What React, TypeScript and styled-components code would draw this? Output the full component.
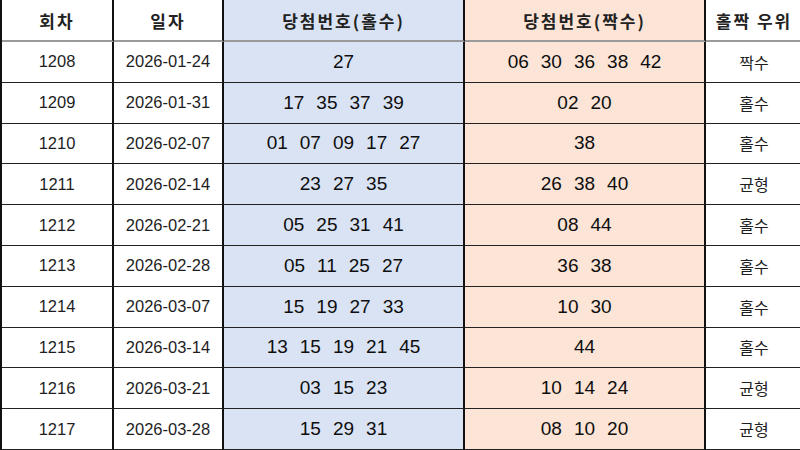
import React from 'react';
import styled, { createGlobalStyle } from 'styled-components';

const GlobalStyle = createGlobalStyle`
  html, body {
    margin: 0;
    padding: 0;
    background: #ffffff;
  }
  body {
    font-family: "Liberation Sans", "Noto Sans CJK KR", Arial, sans-serif;
    color: #1a1a1a;
  }
`;

type Row = {
  round: number;
  date: string;
  odd: string[];
  even: string[];
  result: string;
};

const rows: Row[] = [
  { round: 1208, date: '2026-01-24', odd: ['27'], even: ['06', '30', '36', '38', '42'], result: '짝수' },
  { round: 1209, date: '2026-01-31', odd: ['17', '35', '37', '39'], even: ['02', '20'], result: '홀수' },
  { round: 1210, date: '2026-02-07', odd: ['01', '07', '09', '17', '27'], even: ['38'], result: '홀수' },
  { round: 1211, date: '2026-02-14', odd: ['23', '27', '35'], even: ['26', '38', '40'], result: '균형' },
  { round: 1212, date: '2026-02-21', odd: ['05', '25', '31', '41'], even: ['08', '44'], result: '홀수' },
  { round: 1213, date: '2026-02-28', odd: ['05', '11', '25', '27'], even: ['36', '38'], result: '홀수' },
  { round: 1214, date: '2026-03-07', odd: ['15', '19', '27', '33'], even: ['10', '30'], result: '홀수' },
  { round: 1215, date: '2026-03-14', odd: ['13', '15', '19', '21', '45'], even: ['44'], result: '홀수' },
  { round: 1216, date: '2026-03-21', odd: ['03', '15', '23'], even: ['10', '14', '24'], result: '균형' },
  { round: 1217, date: '2026-03-28', odd: ['15', '29', '31'], even: ['08', '10', '20'], result: '균형' },
];

type Tone = 'plain' | 'odd' | 'even';

const toneBg: Record<Tone, string> = {
  plain: '#ffffff',
  odd: '#dae3f3',
  even: '#fce4d6',
};

const Table = styled.div`
  display: grid;
  grid-template-columns: 112px 110px 241px 241px 96px;
  grid-template-rows: 42px repeat(10, 1fr);
  width: 800px;
  height: 450px;
  border-left: 2px solid #111;
  box-sizing: border-box;
  overflow: hidden;
`;

const Cell = styled.div<{ $tone?: Tone; $last?: boolean; $head?: boolean }>`
  display: flex;
  align-items: center;
  justify-content: center;
  box-sizing: border-box;
  background: ${(p) => toneBg[p.$tone || 'plain']};
  border-right: ${(p) => (p.$last ? 'none' : '2px solid #111')};
  border-bottom: ${(p) => (p.$head ? '2px solid #9a9a9a' : '1px solid #222')};
  white-space: nowrap;
`;

const HeadText = styled.span`
  font-family: "Noto Sans CJK KR", sans-serif;
  font-weight: 700;
  font-size: 17px;
  letter-spacing: 2px;
  color: #222;
`;

const PlainText = styled.span<{ $korean?: boolean }>`
  font-family: ${(p) =>
    p.$korean ? '"Noto Sans CJK KR", sans-serif' : '"Liberation Sans", Arial, sans-serif'};
  font-size: ${(p) => (p.$korean ? '16px' : '16.5px')};
  color: #1e1e1e;
`;

const Numbers = styled.div`
  display: flex;
  gap: 12px;
  font-family: "Liberation Sans", Arial, sans-serif;
  font-size: 19px;
  color: #0e0e0e;
`;

export default function App() {
  return (
    <>
      <GlobalStyle />
      <Table>
        <Cell $head><HeadText>회차</HeadText></Cell>
        <Cell $head><HeadText>일자</HeadText></Cell>
        <Cell $head $tone="odd"><HeadText>당첨번호(홀수)</HeadText></Cell>
        <Cell $head $tone="even"><HeadText>당첨번호(짝수)</HeadText></Cell>
        <Cell $head $last><HeadText>홀짝 우위</HeadText></Cell>
        {rows.map((r) => (
          <React.Fragment key={r.round}>
            <Cell><PlainText>{r.round}</PlainText></Cell>
            <Cell><PlainText>{r.date}</PlainText></Cell>
            <Cell $tone="odd">
              <Numbers>{r.odd.map((n, i) => <span key={i}>{n}</span>)}</Numbers>
            </Cell>
            <Cell $tone="even">
              <Numbers>{r.even.map((n, i) => <span key={i}>{n}</span>)}</Numbers>
            </Cell>
            <Cell $last><PlainText $korean>{r.result}</PlainText></Cell>
          </React.Fragment>
        ))}
      </Table>
    </>
  );
}
